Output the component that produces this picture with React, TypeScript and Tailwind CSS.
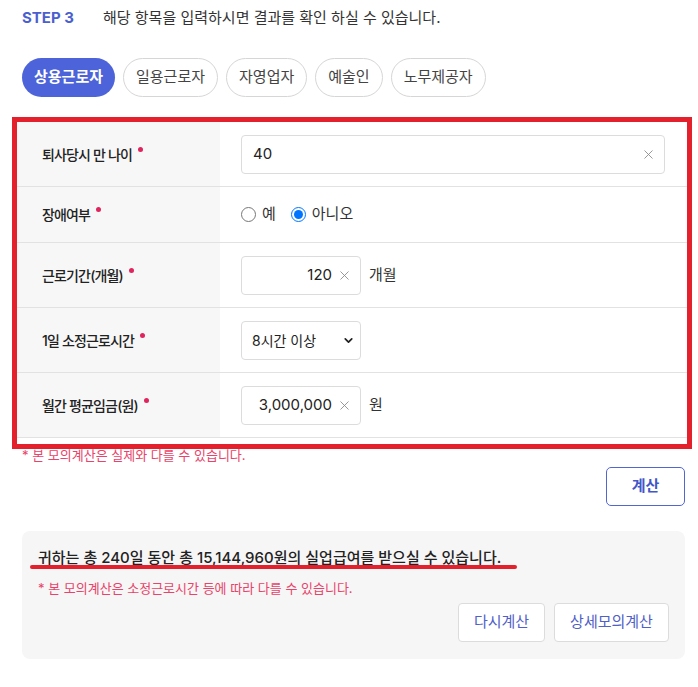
import { ChevronDown, X } from "lucide-react";

const FONT = { fontFamily: "Inter, 'Noto Sans CJK KR', sans-serif" };

function Label({ text }: { text: string }) {
  return (
    <div className="flex w-[203px] shrink-0 items-center bg-[#f7f7f7] pl-[25px]">
      <span className="text-[14px] font-medium tracking-[-0.06em] text-[#222]">
        {text}
      </span>
      <span className="mb-[10px] ml-[6px] h-[5px] w-[5px] rounded-full bg-[#e0245e]" />
    </div>
  );
}

function ClearInput({
  value,
  wide,
  unit,
}: {
  value: string;
  wide?: boolean;
  unit?: string;
}) {
  return (
    <div className="flex items-center gap-[8px]">
      <div
        className={`flex h-[39px] items-center rounded-[4px] border border-[#dcdcdc] bg-white pr-[8px] ${
          wide ? "w-[424px] pl-[11px]" : "w-[120px] justify-end"
        }`}
      >
        <span
          className={`text-[15px] text-[#222] ${wide ? "flex-1" : "mr-[5px]"}`}
        >
          {value}
        </span>
        <X size={15} strokeWidth={1.4} className="text-[#8a8a8a]" />
      </div>
      {unit && <span className="text-[15px] text-[#333]">{unit}</span>}
    </div>
  );
}

function Row({
  label,
  tall = true,
  children,
}: {
  label: string;
  tall?: boolean;
  children: React.ReactNode;
}) {
  return (
    <div
      className={`flex border-b border-[#e2e2e2] ${tall ? "h-[65px]" : "h-[56px]"}`}
    >
      <Label text={label} />
      <div className="flex flex-1 items-center pl-[21px]">{children}</div>
    </div>
  );
}

export default function App() {
  const tabs = ["상용근로자", "일용근로자", "자영업자", "예술인", "노무제공자"];

  return (
    <main
      className="min-h-[687px] bg-white pl-[22px] pr-[13px] pt-[7px]"
      style={FONT}
    >
      {/* Step header */}
      <header className="flex h-[22px] items-center">
        <span className="w-[81px] text-[15px] font-bold text-[#4b5fcf]">
          STEP 3
        </span>
        <span className="text-[15px] text-[#333]">
          해당 항목을 입력하시면 결과를 확인 하실 수 있습니다.
        </span>
      </header>

      {/* Worker type tabs */}
      <nav className="mt-[29px] flex gap-[8px]">
        {tabs.map((tab, i) => (
          <button
            key={tab}
            className={`h-[39px] rounded-full px-[12px] text-[15px] ${
              i === 0
                ? "bg-[#4c63d9] font-bold text-white"
                : "border border-[#d6d6d6] bg-white text-[#444]"
            }`}
          >
            {tab}
          </button>
        ))}
      </nav>

      {/* Input table */}
      <section className="relative -ml-[5px] -mr-[2px] mt-[25px]">
        <Row label="퇴사당시 만 나이">
          <ClearInput value="40" wide />
        </Row>
        <Row label="장애여부" tall={false}>
          <label className="flex items-center gap-[6px] text-[15px] text-[#333]">
            <input type="radio" name="disabled" className="h-[15px] w-[15px]" />
            예
          </label>
          <label className="ml-[15px] flex items-center gap-[6px] text-[15px] text-[#333]">
            <input
              type="radio"
              name="disabled"
              defaultChecked
              className="h-[15px] w-[15px]"
            />
            아니오
          </label>
        </Row>
        <Row label="근로기간(개월)">
          <ClearInput value="120" unit="개월" />
        </Row>
        <Row label="1일 소정근로시간">
          <div className="relative w-[120px]">
            <select className="h-[39px] w-full appearance-none rounded-[4px] border border-[#dcdcdc] bg-white pl-[10px] text-[14px] text-[#222]">
              <option>8시간 이상</option>
            </select>
            <ChevronDown
              size={13}
              strokeWidth={3.2}
              className="pointer-events-none absolute right-[6px] top-[13px] text-[#222]"
            />
          </div>
        </Row>
        <Row label="월간 평균임금(원)">
          <ClearInput value="3,000,000" unit="원" />
        </Row>

        {/* annotation box */}
        <div className="pointer-events-none absolute -bottom-[11px] -left-[5px] -right-[5px] -top-[5px] border-[5px] border-[#e3202c]" />
      </section>

      <p className="mt-[8px] text-[13px] text-[#e8436a]">
        * 본 모의계산은 실제와 다를 수 있습니다.
      </p>

      <div className="mt-[1px] flex justify-end">
        <button className="h-[39px] w-[79px] rounded-[5px] border border-[#5366cf] bg-white text-[15px] font-bold text-[#4355c7]">
          계산
        </button>
      </div>

      {/* Result */}
      <section className="relative mt-[25px] rounded-[8px] bg-[#f6f6f6] px-[16px] pb-[17px] pt-[16px]">
        <p className="text-[15px] font-medium text-[#222] underline underline-offset-[3px]">
          귀하는 총 240일 동안 총 15,144,960원의 실업급여를 받으실 수 있습니다.
        </p>
        <div className="pointer-events-none absolute left-[8px] top-[34px] h-[4px] w-[487px] rounded-full bg-[#e3202c]" />
        <p className="mt-[10px] text-[13px] text-[#e8436a]">
          * 본 모의계산은 소정근로시간 등에 따라 다를 수 있습니다.
        </p>
        <div className="mt-[4px] flex justify-end gap-[9px]">
          <button className="h-[39px] w-[87px] rounded-[4px] border border-[#dcdcdc] bg-white text-[15px] text-[#5060c8]">
            다시계산
          </button>
          <button className="h-[39px] w-[115px] rounded-[4px] border border-[#dcdcdc] bg-white text-[15px] text-[#5060c8]">
            상세모의계산
          </button>
        </div>
      </section>
    </main>
  );
}
